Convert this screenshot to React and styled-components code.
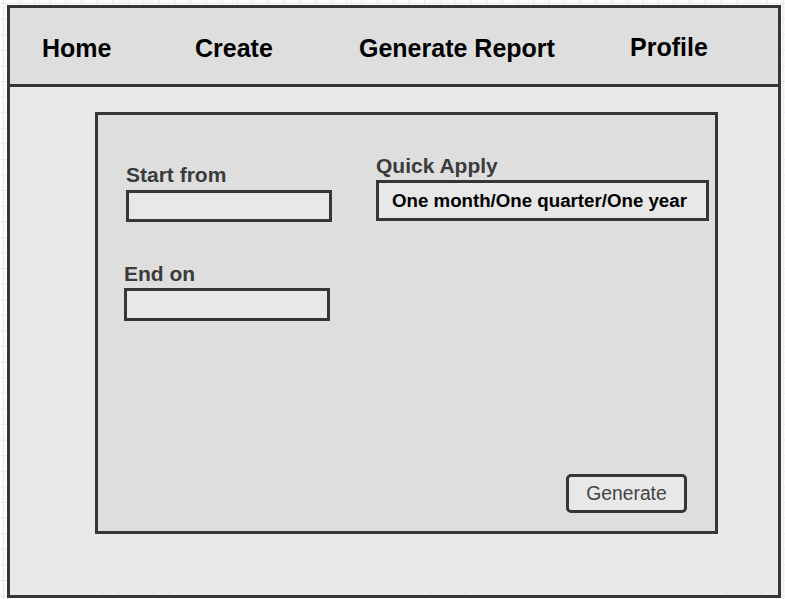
import styled, { createGlobalStyle } from 'styled-components';

const GlobalStyle = createGlobalStyle`
   html, body {
      margin: 0;
      padding: 0;
   }
   body {
      font-family: 'Liberation Sans', Arial, sans-serif;
      background-color: #fdf9f6;
      background-image:
         linear-gradient(to right, #e2eaf5 1px, transparent 1px),
         linear-gradient(to bottom, #e2eaf5 1px, transparent 1px);
      background-size: 15.6px 15.6px;
      background-position: 3px 3px;
   }
`;

const Frame = styled.div`
   box-sizing: border-box;
   width: 774px;
   height: 593px;
   margin: 5px 0 0 7px;
   border: 3px solid #363636;
   background: #eae8e8;
   display: flex;
   flex-direction: column;
`;

const NavBar = styled.nav`
   box-sizing: border-box;
   height: 79px;
   flex-shrink: 0;
   background: #dedede;
   border-bottom: 3px solid #363636;
   display: grid;
   grid-template-columns: 153px 164px 271px auto;
   align-items: center;
   padding: 4px 0 0 32px;
`;

const NavItem = styled.a`
   font-size: 25px;
   font-weight: 700;
   color: #000;
   text-decoration: none;
   cursor: pointer;
   margin-top: ${(p) => (p.$raised ? '-2px' : '0')};
`;

const Body = styled.main`
   flex-grow: 1;
   padding: 25px 0 0 85px;
`;

const Card = styled.section`
   box-sizing: border-box;
   width: 623px;
   height: 422px;
   border: 3px solid #363636;
   background: #dedede;
   display: flex;
   flex-direction: column;
`;

const FormRow = styled.div`
   display: flex;
   padding-left: 28px;
`;

const LeftCol = styled.div`
   width: 250px;
   padding-top: 48px;
   display: flex;
   flex-direction: column;
`;

const RightCol = styled.div`
   width: 333px;
   padding-top: 39px;
   display: flex;
   flex-direction: column;
`;

const Field = styled.div`
   display: flex;
   flex-direction: column;
   margin-top: ${(p) => p.$top || 0}px;
   margin-left: ${(p) => p.$shift || 0}px;
`;

const Label = styled.label`
   font-size: 21px;
   line-height: 24px;
   font-weight: 700;
   color: #3b3b3b;
`;

const TextBox = styled.div`
   box-sizing: border-box;
   width: 206px;
   height: ${(p) => p.$h || 32}px;
   margin-top: ${(p) => p.$gap || 3}px;
   border: 3px solid #363636;
   background: #e8e8e8;
`;

const QuickBox = styled.div`
   box-sizing: border-box;
   width: 333px;
   height: 41px;
   margin-top: 2px;
   border: 3px solid #363636;
   background: #e8e8e8;
   display: flex;
   align-items: center;
   padding-left: 13px;
   font-size: 18.7px;
   font-weight: 700;
   color: #000;
   white-space: nowrap;
`;

const Footer = styled.div`
   margin-top: auto;
   display: flex;
   justify-content: flex-end;
   padding: 0 28px 18px 0;
`;

const GenerateButton = styled.button`
   box-sizing: border-box;
   width: 121px;
   height: 39px;
   border: 3px solid #363636;
   border-radius: 5px;
   background: #e8e8e8;
   font-family: 'Liberation Sans', Arial, sans-serif;
   font-size: 19.3px;
   color: #444;
   padding: 0;
   cursor: pointer;
`;

function App() {
   return (
      <>
         <GlobalStyle />
         <Frame>
            {/* top navigation */}
            <NavBar>
               <NavItem>Home</NavItem>
               <NavItem>Create</NavItem>
               <NavItem>Generate Report</NavItem>
               <NavItem $raised>Profile</NavItem>
            </NavBar>

            <Body>
               <Card>
                  <FormRow>
                     <LeftCol>
                        <Field>
                           <Label>Start from</Label>
                           <TextBox />
                        </Field>
                        <Field $top={40} $shift={-2}>
                           <Label>End on</Label>
                           <TextBox $h={33} $gap={2} />
                        </Field>
                     </LeftCol>

                     <RightCol>
                        <Label>Quick Apply</Label>
                        <QuickBox>One month/One quarter/One year</QuickBox>
                     </RightCol>
                  </FormRow>

                  <Footer>
                     <GenerateButton>Generate</GenerateButton>
                  </Footer>
               </Card>
            </Body>
         </Frame>
      </>
   );
}

export default App;
